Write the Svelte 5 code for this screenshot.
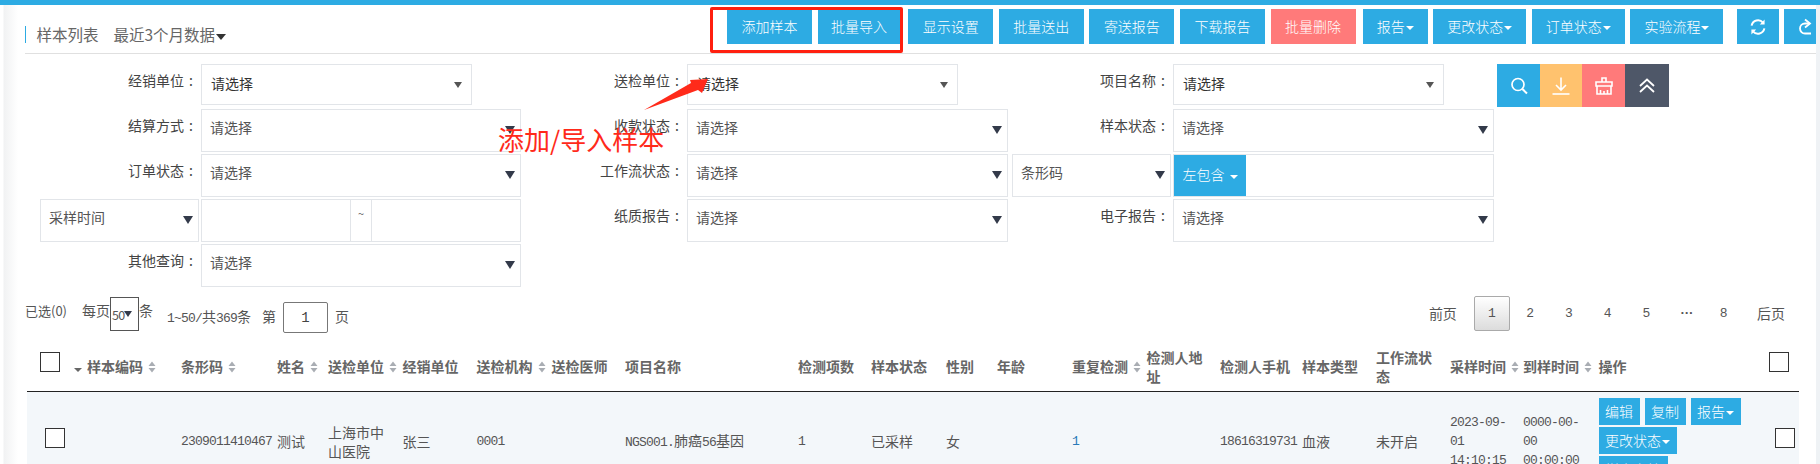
<script lang="ts">
  const tools = [
    { label: '添加样本', cls: '' },
    { label: '批量导入', cls: 'tight' },
    { label: '显示设置', cls: 'wide' },
    { label: '批量送出', cls: '' },
    { label: '寄送报告', cls: '' },
    { label: '下载报告', cls: '' },
    { label: '批量删除', cls: 'danger' },
    { label: '报告', cls: 'caret' },
    { label: '更改状态', cls: 'caret' },
    { label: '订单状态', cls: 'caret' },
    { label: '实验流程', cls: 'caret' }
  ];

  // header cells: label, sortable, width
  const columns = [
    { label: '条形码', sort: true, w: 96 },
    { label: '姓名', sort: true, w: 51 },
    { label: '送检单位', sort: true, w: 74.5 },
    { label: '经销单位', sort: false, w: 74 },
    { label: '送检机构', sort: true, w: 75 },
    { label: '送检医师', sort: false, w: 73.5 },
    { label: '项目名称', sort: false, w: 173 },
    { label: '检测项数', sort: false, w: 73 },
    { label: '样本状态', sort: false, w: 75 },
    { label: '性别', sort: false, w: 51 },
    { label: '年龄', sort: false, w: 75 },
    { label: '重复检测', sort: true, w: 74.5 },
    { label: '检测人地址', sort: false, w: 73.5 },
    { label: '检测人手机', sort: false, w: 82 },
    { label: '样本类型', sort: false, w: 74 },
    { label: '工作流状态', sort: false, w: 74 },
    { label: '采样时间', sort: true, w: 73 },
    { label: '到样时间', sort: true, w: 75.6 }
  ];

  const pages = ['2', '3', '4', '5'];
</script>

{#snippet sortIcon()}
  <svg class="sort" width="8" height="12" viewBox="0 0 8 12"><path d="M4 0.5 L7.5 5 H0.5 Z M4 11.5 L7.5 7 H0.5 Z" fill="#a9adb3" /></svg>
{/snippet}

{#snippet select(text: string, cls = '')}
  <div class="select {cls}"><span>{text}</span><i class="arrow"></i></div>
{/snippet}

<div class="topbar"></div>

<div class="page">
  <header class="head">
    <div class="title">
      <span class="title-main">样本列表</span>
      <span class="title-sub">最近3个月数据<i class="title-caret"></i></span>
    </div>
    <div class="tools">
      {#each tools as t}
        <button class="btn {t.cls}">{t.label}{#if t.cls === 'caret'}<i class="down"></i>{/if}</button>
      {/each}
      <button class="btn icon first-icon" aria-label="刷新">
        <svg width="18" height="18" viewBox="0 0 18 18" fill="none" stroke="#fff" stroke-width="2">
          <path d="M2.6 7.6 A6.6 6.6 0 0 1 14 4.6" />
          <path d="M15.4 10.4 A6.6 6.6 0 0 1 4 13.4" />
          <path d="M15.6 1.5 V6.4 H10.8 Z M2.4 16.5 V11.6 H7.2 Z" fill="#fff" stroke="none" />
        </svg>
      </button>
      <button class="btn icon" aria-label="分享">
        <svg width="18" height="18" viewBox="0 0 18 18" fill="none" stroke="#fff" stroke-width="1.8">
          <path d="M9 1.5 L14 5.5 L9 9.5" />
          <path d="M13.5 5.5 H9 A5 5 0 0 0 4 10.5 A5 5 0 0 0 9 15.5 H15" />
        </svg>
      </button>
    </div>
  </header>

  <form class="filters">
    <label class="lab">经销单位</label>
    {@render select('请选择', 'short dark')}
    <label class="lab">送检单位</label>
    {@render select('请选择', 'short dark')}
    <label class="lab">项目名称</label>
    {@render select('请选择', 'short dark')}
    <div class="actions">
      <button type="button" class="act blue" aria-label="搜索">
        <svg width="20" height="20" viewBox="0 0 20 20" fill="none" stroke="#fff" stroke-width="1.7"><circle cx="9" cy="8.5" r="6" /><path d="M13.4 13 L18 17.5" stroke-width="2" /></svg>
      </button>
      <button type="button" class="act yellow" aria-label="下载">
        <svg width="20" height="20" viewBox="0 0 20 20" fill="none" stroke="#fff" stroke-width="1.6"><path d="M10 1.5 V14 M5 9 L10 14 L15 9" /><path d="M1.5 18 H18.5" /></svg>
      </button>
      <button type="button" class="act red" aria-label="清空">
        <svg width="20" height="20" viewBox="0 0 20 20" fill="none" stroke="#fff" stroke-width="1.6"><path d="M8 6 V2 H12 V6" /><path d="M2 6 H18 V10 H2 Z" /><path d="M3 10 V18 H17 V10" /><path d="M6.5 18 V14 M10 18 V15 M13.5 18 V14" /></svg>
      </button>
      <button type="button" class="act slate" aria-label="收起">
        <svg width="20" height="20" viewBox="0 0 20 20" fill="none" stroke="#fff" stroke-width="1.8"><path d="M3 10 L10 3.5 L17 10" /><path d="M3 16 L10 9.5 L17 16" /></svg>
      </button>
    </div>

    <label class="lab rowstart">结算方式</label>
    {@render select('请选择')}
    <label class="lab">收款状态</label>
    {@render select('请选择')}
    <label class="lab">样本状态</label>
    {@render select('请选择')}

    <label class="lab rowstart">订单状态</label>
    {@render select('请选择')}
    <label class="lab">工作流状态</label>
    {@render select('请选择')}
    {@render select('条形码', 'barcode')}
    <div class="combo">
      <button type="button" class="contain">左包含<i class="down small"></i></button>
    </div>

    {@render select('采样时间', 'time rowstart')}
    <div class="dates">
      <div class="date"></div>
      <div class="tilde">~</div>
      <div class="date"></div>
    </div>
    <label class="lab">纸质报告</label>
    {@render select('请选择')}
    <label class="lab">电子报告</label>
    {@render select('请选择')}

    <label class="lab rowstart">其他查询</label>
    {@render select('请选择')}
  </form>

  <div class="pager">
    <div class="pager-left">
      <span class="selected">已选(0)</span>
      <span class="per">每页</span>
      <span class="size"><span>50</span><i class="arrow"></i></span>
      <span class="per">条</span>
      <span class="range"><span class="mono">1~50/</span>共<span class="mono">369</span>条</span>
      <span>第</span>
      <input class="page-input" value="1" />
      <span>页</span>
    </div>
    <nav class="pager-right">
      <span class="prev">前页</span>
      <span class="pg current">1</span>
      {#each pages as p}<span class="pg">{p}</span>{/each}
      <span class="pg dots">···</span>
      <span class="pg">8</span>
      <span class="next">后页</span>
    </nav>
  </div>

  <table class="grid">
    <colgroup>
      <col style="width: 39px" />
      <col style="width: 107px" />
      {#each columns as c}<col style="width: {c.w}px" />{/each}
      <col style="width: 169px" />
      <col style="width: 39.4px" />
    </colgroup>
    <thead>
      <tr>
        <th class="chk-left"><i class="box"></i></th>
        <th class="nb"><i class="sort-down"></i>样本编码{@render sortIcon()}</th>
        {#each columns as c}
          <th class:nb={c.sort}>{c.label}{#if c.sort}{@render sortIcon()}{/if}</th>
        {/each}
        <th>操作</th>
        <th class="chk-right"><i class="box"></i></th>
      </tr>
    </thead>
    <tbody>
      <tr>
        <td class="chk-row"><i class="box"></i></td>
        <td></td>
        <td class="mono nb">2309011410467</td>
        <td>测试</td>
        <td>上海市中山医院</td>
        <td>张三</td>
        <td class="mono">0001</td>
        <td></td>
        <td><span class="mono">NGS001.</span>肺癌<span class="mono">56</span>基因</td>
        <td class="mono">1</td>
        <td>已采样</td>
        <td>女</td>
        <td></td>
        <td class="mono link">1</td>
        <td></td>
        <td class="mono nb">18616319731</td>
        <td>血液</td>
        <td>未开启</td>
        <td class="mono time-cell">2023-09-01 14:10:15</td>
        <td class="mono time-cell">0000-00-00 00:00:00</td>
        <td class="ops">
          <button class="op">编辑</button><button class="op">复制</button><button class="op">报告<i class="down"></i></button>
          <button class="op">更改状态<i class="down"></i></button>
          <button class="op">样本审核</button>
        </td>
        <td class="chk-row right"><i class="box"></i></td>
      </tr>
    </tbody>
  </table>

  <!-- hand drawn annotation on top of the form -->
  <div class="redbox"></div>
  <svg class="pointer" width="80" height="45" viewBox="640 75 80 45">
    <polygon points="644,110 691,83 690,80 708,79 702,93 698,90" fill="#ff2a1a" />
  </svg>
  <div class="note">添加/导入样本</div>
</div>

<style>
  :global(html), :global(body) {
    margin: 0;
    overflow: hidden;
    background: #fff;
  }
  :global(body) {
    height: 464px;
    font-family: "Noto Sans CJK SC", "Liberation Sans", sans-serif;
    font-size: 14px;
    color: #555;
  }
  i { font-style: normal; display: inline-block; }
  button { font-family: inherit; border: 0; cursor: pointer; }

  .topbar { height: 5px; background: #2dabe3; }
  .page {
    position: relative;
    height: 459px;
    overflow: hidden;
    box-sizing: border-box;
    padding-left: 25px;
    margin-right: 4px;
    background: #fff linear-gradient(90deg, #fff 3px, #f1f2f3 4px, #fff 18px) no-repeat left / 20px 100%;
    box-shadow: 4px 0 0 #eff2f5;
  }

  .head {
    display: flex;
    height: 48px;
    border-bottom: 1px solid #e0e0e0;
    box-sizing: content-box;
  }
  .title {
    box-sizing: border-box;
    flex: 0 0 702px;
    height: 17px;
    margin-top: 21px;
    border-left: 1.5px solid #2dabe3;
    padding: 0 0 2px 10.5px;
    display: flex;
    align-items: center;
    white-space: nowrap;
    color: #666;
    font-size: 15.5px;
  }
  .title-sub { margin-left: 15px; }
  .title-caret {
    width: 0; height: 0;
    margin-left: 1px;
    vertical-align: 1px;
    border: 5px solid transparent;
    border-top: 6px solid #333;
    border-bottom: 0;
  }
  .tools { display: flex; gap: 5.6px; margin-top: 4px; white-space: nowrap; }
  .btn {
    height: 35px;
    padding: 0 14.5px 2px;
    background: #2dabe3;
    color: #fff;
    font-size: 14px;
    font-weight: 300;
  }
  .btn.tight { padding: 0 13.5px 2px; }
  .btn.wide { margin-left: 2px; }
  .btn.danger { background: #ff7a7a; }
  .btn.caret { padding: 0 14px 2px 14px; }
  .btn.danger + .btn.caret { margin-left: 1.5px; }
  .btn.icon { width: 42px; padding: 0; flex: none; }
  .btn.icon svg { display: block; margin: 0 auto; }
  .btn.first-icon { margin-left: 7.5px; }
  .down {
    width: 0; height: 0;
    margin-left: 1px;
    vertical-align: 2px;
    border: 4px solid transparent;
    border-top: 4px solid #fff;
    border-bottom: 0;
  }
  .down.small { margin-left: 5px; vertical-align: 1px; }

  .filters {
    display: grid;
    grid-template-columns: 176px 320px 166px 321px 165px 321px auto;
    grid-auto-rows: 45px;
    padding-top: 10px;
    align-items: start;
  }
  .rowstart { grid-column: 1; }
  .lab {
    justify-self: end;
    padding: 5px 8px 0 0;
    line-height: 22px;
    font-size: 14px;
    color: #444;
    white-space: nowrap;
  }
  .lab::after { content: ":"; margin-left: 5px; }
  .select {
    position: relative;
    box-sizing: border-box;
    height: 43px;
    display: flex;
    align-items: center;
    padding: 0 0 7px 8px;
    border: 1px solid #e2e5e9;
    color: #555;
    background: #fff;
  }
  .select .arrow {
    position: absolute;
    right: 5px;
    top: 16px;
  }
  .arrow {
    width: 0; height: 0;
    border: 5.5px solid transparent;
    border-top: 8px solid #333a4a;
    border-bottom: 0;
  }
  .select.short { width: 271px; height: 41px; }
  .select.dark { color: #333; padding: 0 0 3px 9px; }
  .select.dark .arrow {
    right: 9px;
    top: 17px;
    border-width: 4px;
    border-top: 6px solid #555;
    border-bottom: 0;
  }
  .select.barcode, .select.time { width: 159px; justify-self: end; margin-right: 2px; }

  .actions { display: flex; margin-left: 3px; }
  .act {
    height: 43px;
    width: 43px;
    padding: 0;
    display: flex;
    align-items: center;
    justify-content: center;
  }
  .act.blue { background: #2dabe3; }
  .act.yellow { background: #ffc26e; width: 42px; }
  .act.red { background: #ff7a7a; }
  .act.slate { background: #4e5768; width: 44px; }

  .combo {
    box-sizing: border-box;
    height: 43px;
    border: 1px solid #e2e5e9;
    display: flex;
  }
  .contain {
    width: 72px;
    height: 100%;
    padding: 0 0 3px;
    background: #2dabe3;
    color: #fff;
    font-size: 14px;
    font-weight: 300;
  }
  .dates { display: flex; height: 43px; }
  .date { box-sizing: border-box; flex: 1; border: 1px solid #e2e5e9; }
  .tilde {
    flex: 0 0 20px;
    text-align: center;
    font-size: 11px;
    line-height: 26px;
    color: #666;
    border-bottom: 1px solid #e2e5e9;
    border-top: 1px solid #e2e5e9;
    box-sizing: border-box;
  }

  .mono {
    font-family: "Liberation Mono", monospace;
    font-size: 13px;
    letter-spacing: -0.8px;
  }

  .pager {
    display: flex;
    justify-content: space-between;
    height: 38px;
    margin-top: 8px;
    white-space: nowrap;
    color: #555;
  }
  .pager-left { display: flex; align-items: center; font-size: 14px; }
  .selected { margin-top: -12px; font-size: 13px; width: 57px; }
  .per { margin-top: -12px; }
  .size {
    box-sizing: border-box;
    width: 29px;
    height: 34px;
    margin-top: -4px;
    border: 1px solid #555;
    display: flex;
    align-items: center;
    font-size: 12.5px;
  }
  .size span { margin-left: 1px; letter-spacing: -0.8px; }
  .size .arrow {
    border-width: 4px;
    border-top: 6px solid #333a4a;
    border-bottom: 0;
  }
  .range { margin-left: 14px; width: 95px; }
  .page-input {
    box-sizing: border-box;
    width: 45px;
    height: 31px;
    margin: 3px 7px 0 7px;
    border: 1px solid #777;
    border-radius: 2px;
    text-align: center;
    font-family: "Liberation Mono", monospace;
    font-size: 14px;
    color: #444;
    background: #fff;
    padding: 0;
  }
  .pager-right { display: flex; align-items: center; margin-right: 31px; margin-top: -6px; }
  .prev { margin-right: 17px; }
  .next { margin-left: 14px; }
  .pg {
    width: 38.7px;
    text-align: center;
    font-family: "Liberation Mono", monospace;
    font-size: 13px;
  }
  .pg.current {
    box-sizing: border-box;
    width: 36px;
    height: 35px;
    line-height: 33px;
    margin-right: 1px;
    border: 1px solid #aaa;
    border-radius: 2px;
    background: linear-gradient(#fff, #dcdcdc);
  }
  .pg.dots { font-weight: 700; letter-spacing: -3.5px; }

  .grid {
    table-layout: fixed;
    border-collapse: collapse;
    width: 1772px;
    margin: 7px 0 0 2px;
    color: #555;
  }
  .grid th {
    height: 49px;
    padding: 0 3px 0 8px;
    text-align: left;
    font-size: 14px;
    font-weight: 700;
    color: #666;
    line-height: 19px;
    border-bottom: 1px solid #222;
  }
  .grid th.nb, .grid td.nb { white-space: nowrap; overflow: visible; }
  .grid td {
    background: #f3f7fa;
    padding: 6px 8px;
    line-height: 19px;
    vertical-align: middle;
  }
  .sort { margin-left: 5px; vertical-align: -1px; }
  .sort-down {
    width: 0; height: 0;
    margin-right: 5px;
    vertical-align: 0;
    border: 4px solid transparent;
    border-top: 4px solid #666;
    border-bottom: 0;
  }
  .box {
    box-sizing: border-box;
    width: 20px;
    height: 20px;
    border: 1px solid #333;
    background: #fff;
  }
  .grid th.chk-left { padding: 0 0 0 13px; }
  .grid th.chk-left .box, .grid th.chk-right .box { margin-top: -10px; display: block; }
  .grid th.chk-right { padding: 0 0 0 9px; }
  .grid td.chk-row { padding: 0 0 8px 18px; }
  .grid td.chk-row.right { padding-left: 15px; }
  .grid td.chk-row .box { display: block; }
  .link { color: #2a7ab8; }
  .time-cell { line-height: 18.5px; }
  .grid td.ops { padding: 6px 12px 6px 8px; }
  .op {
    height: 27px;
    padding: 0 6.5px 2px;
    margin: 0 5px 2px 0;
    background: #2dabe3;
    color: #fff;
    font-size: 14px;
    font-weight: 300;
    vertical-align: top;
  }

  .redbox {
    position: absolute;
    left: 710px;
    top: 2px;
    width: 193px;
    height: 46px;
    box-sizing: border-box;
    border: 3px solid #ff1f0f;
    border-radius: 2px;
  }
  .pointer { position: absolute; left: 640px; top: 70px; }
  .note {
    position: absolute;
    left: 498px;
    top: 117px;
    font-size: 26px;
    line-height: 34px;
    color: #ff2a1a;
    white-space: nowrap;
    font-weight: 400;
  }
</style>
